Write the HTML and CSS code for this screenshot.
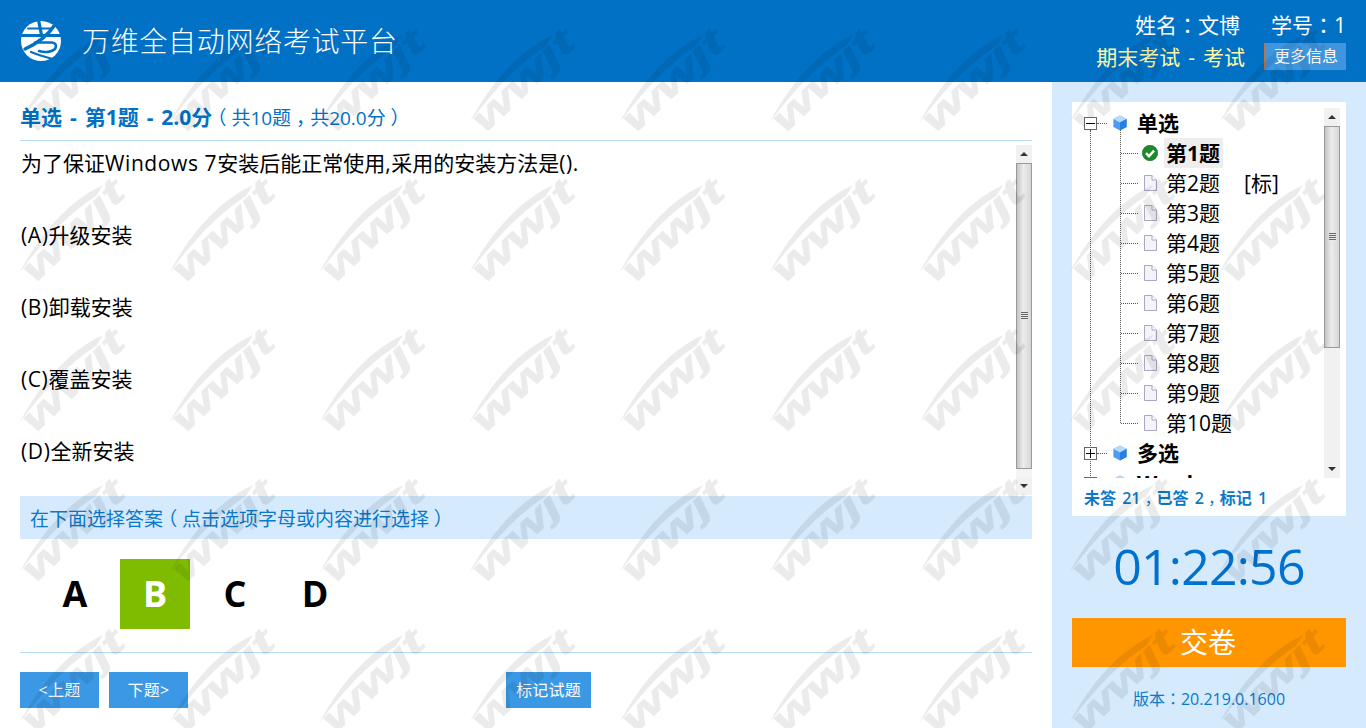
FILE: index.html
```html
<!DOCTYPE html>
<html lang="zh-CN">
<head>
<meta charset="utf-8">
<title>万维全自动网络考试平台</title>
<link rel="stylesheet" href="styles.css">
</head>
<body>
<header class="topbar">
  <div class="brand">
    <svg class="logo" viewBox="0 0 40 40" role="img" aria-label="考">
      <circle cx="20" cy="20" r="20" fill="#fff"/>
      <g fill="none" stroke="#0071c5" stroke-linecap="round">
        <path d="M7 7.5H30" stroke-width="1.8"/>
        <path d="M-1 14.5H41" stroke-width="3"/>
        <path d="M17.5 -1L20.5 14" stroke-width="3.2"/>
        <path d="M33 5C27 14 17 22 4 28" stroke-width="3.4"/>
        <path d="M14 21.5H31C35 22 36 25 34 28C31 31 24 32 18 30" stroke-width="2.6"/>
        <path d="M10 31C17 34 24 36 32 38" stroke-width="2.2"/>
      </g>
    </svg>
    <span class="brand-name">万维全自动网络考试平台</span>
  </div>
  <div class="meta">
    <div class="meta-row"><span>姓名<span class="p" lang="zh-TW">：</span>文博</span><span class="meta-id">学号<span class="p" lang="zh-TW">：</span>1</span></div>
    <div class="meta-row meta-exam"><span class="exam-name">期末考试 - 考试</span><a class="more">更多信息</a></div>
  </div>
</header>
<div class="body">
  <main class="main">
    <h1 class="qtitle"><b>单选 - 第1题 - 2.0分</b><span class="qsub"><span class="p po" lang="zh-TW">（</span>共10题<span class="p c" lang="zh-TW">，</span>共20.0分<span class="p pc" lang="zh-TW">）</span></span></h1>
    <div class="qbox">
      <div class="qtext">
        <p>为了保证<span class="lat">Windows 7</span>安装后能正常使用<span class="lat">,</span>采用的安装方法是<span class="lat">().</span></p>
        <p><span class="lat">(A)</span>升级安装</p>
        <p><span class="lat">(B)</span>卸载安装</p>
        <p><span class="lat">(C)</span>覆盖安装</p>
        <p><span class="lat">(D)</span>全新安装</p>
      </div>
      <div class="vscroll qscroll">
        <span class="sb-btn"><i class="arrow-up"></i></span>
        <span class="sb-thumb"><i class="grip"></i></span>
        <span class="sb-track"></span>
        <span class="sb-btn"><i class="arrow-down"></i></span>
      </div>
    </div>
    <div class="hint">在下面选择答案<span class="p po" lang="zh-TW">（</span>点击选项字母或内容进行选择<span class="p pc" lang="zh-TW">）</span></div>
    <div class="choices">
      <span class="choice">A</span>
      <span class="choice on">B</span>
      <span class="choice">C</span>
      <span class="choice">D</span>
    </div>
    <div class="nav">
      <div class="nav-left"><a class="btn">&lt;上题</a><a class="btn">下题&gt;</a></div>
      <a class="btn mark">标记试题</a>
    </div>
  </main>
  <aside class="side">
    <div class="treebox">
      <div class="treewrap">
        <div class="tree">
          <div class="row group"><i class="box minus"></i><i class="hdash"></i><svg class="cube" viewBox="0 0 14 16"><use href="#cube"/></svg><span>单选</span></div>
          <div class="leaves">
            <div class="row leaf"><i class="hdash2"></i><svg class="check" viewBox="0 0 16 16"><circle cx="8" cy="8" r="7.7" fill="#1d8a2b"/><circle cx="8" cy="8" r="7.7" fill="none" stroke="#0f6a1e" stroke-width=".6"/><path d="M4 8.2l3 3 5-5.6" fill="none" stroke="#fff" stroke-width="2.4"/></svg><span class="cur">第1题</span></div>
            <div class="row leaf"><i class="hdash2"></i><svg class="doc" viewBox="0 0 13 16"><use href="#doc"/></svg><span>第2题</span><span class="flag">[标]</span></div>
            <div class="row leaf"><i class="hdash2"></i><svg class="doc" viewBox="0 0 13 16"><use href="#doc"/></svg><span>第3题</span></div>
            <div class="row leaf"><i class="hdash2"></i><svg class="doc" viewBox="0 0 13 16"><use href="#doc"/></svg><span>第4题</span></div>
            <div class="row leaf"><i class="hdash2"></i><svg class="doc" viewBox="0 0 13 16"><use href="#doc"/></svg><span>第5题</span></div>
            <div class="row leaf"><i class="hdash2"></i><svg class="doc" viewBox="0 0 13 16"><use href="#doc"/></svg><span>第6题</span></div>
            <div class="row leaf"><i class="hdash2"></i><svg class="doc" viewBox="0 0 13 16"><use href="#doc"/></svg><span>第7题</span></div>
            <div class="row leaf"><i class="hdash2"></i><svg class="doc" viewBox="0 0 13 16"><use href="#doc"/></svg><span>第8题</span></div>
            <div class="row leaf"><i class="hdash2"></i><svg class="doc" viewBox="0 0 13 16"><use href="#doc"/></svg><span>第9题</span></div>
            <div class="row leaf last"><i class="hdash2"></i><svg class="doc" viewBox="0 0 13 16"><use href="#doc"/></svg><span>第10题</span></div>
          </div>
          <div class="row group link-down"><i class="box plus"></i><i class="hdash"></i><svg class="cube" viewBox="0 0 14 16"><use href="#cube"/></svg><span>多选</span></div>
          <div class="row group"><i class="box plus"></i><i class="hdash"></i><svg class="cube" viewBox="0 0 14 16"><use href="#cube"/></svg><span>Word</span></div>
        </div>
        <div class="vscroll treescroll">
          <span class="sb-btn"><i class="arrow-up"></i></span>
          <span class="sb-thumb"><i class="grip"></i></span>
          <span class="sb-track"></span>
          <span class="sb-btn"><i class="arrow-down"></i></span>
        </div>
      </div>
      <div class="stats">未答 21<span class="p c" lang="zh-TW">，</span>已答 2<span class="p c" lang="zh-TW">，</span>标记 1</div>
    </div>
    <div class="timer">01:22:56</div>
    <a class="submit">交卷</a>
    <div class="version">版本<span class="p" lang="zh-TW">：</span>20.219.0.1600</div>
  </aside>
</div>
<svg class="watermark" width="1366" height="728" aria-hidden="true">
  <defs>
    <symbol id="cube" viewBox="0 0 14 16">
      <path d="M7 .4l6.6 3.6v8L7 15.6.4 12V4z" fill="#4d9cf0"/>
      <path d="M7 .4l6.6 3.6L7 7.6.4 4z" fill="#b5dcfd"/>
      <path d="M7 7.6v8l6.6-3.6V4z" fill="#2a7fe4"/>
    </symbol>
    <symbol id="doc" viewBox="0 0 13 16">
      <path d="M.5 .5h7.5l4.5 4.5v10.5H.5z" fill="#f3f3f8" stroke="#a9a8c4"/>
      <path d="M8 .5v4.5h4.5" fill="#fff" stroke="#a9a8c4"/>
    </symbol>
    <pattern id="wm" width="150" height="150" patternUnits="userSpaceOnUse">
      <g opacity=".08" fill="#000">
        <path d="M20 122C38 88 66 52 103 35L96 46C68 64 44 90 20 122Z"/>
        <text class="wm-text" transform="translate(35 134) rotate(-44) scale(1.65 1)">wwjt</text>
      </g>
    </pattern>
  </defs>
  <rect width="1366" height="728" fill="url(#wm)"/>
</svg>
</body>
</html>
```
FILE: styles.css
```css
* { box-sizing: border-box; }
html, body { margin: 0; height: 100%; overflow: hidden; }
body {
  width: 1366px; height: 728px; background: #fff; color: #000;
  font-family: "Open Sans", "Noto Sans CJK SC", sans-serif;
  display: flex; flex-direction: column;
}
a { display: block; }
i { display: block; font-style: normal; }
.p { font-family: "Noto Sans CJK TC", sans-serif; font-weight: 400; }
.c { vertical-align: -.3em; }
.po { margin: 0 .25em 0 -.25em; }
.pc { margin: 0 -.25em 0 .25em; }
.lat { letter-spacing: .6px; }

.topbar { height: 82px; background: #0071c5; color: #fff; display: flex; justify-content: space-between; padding: 0 20px 0 21px; flex: none; }
.brand { display: flex; align-items: center; }
.logo { width: 40px; height: 40px; flex: none; }
.brand-name { margin-left: 21px; font-size: 28px; letter-spacing: .7px; line-height: 40px; font-weight: 300; }
.meta { padding-top: 8px; text-align: right; }
.meta-row { display: flex; justify-content: flex-end; align-items: center; font-size: 21px; height: 31px; }
.meta-id { margin-left: 31px; }
.meta-exam { margin-top: 2px; }
.exam-name { color: #fff9a6; word-spacing: 2.5px; padding-bottom: 2px; }
.more { margin-left: 19px; width: 82px; height: 27px; background: #3f96df; border-left: 2px solid #c8713d; font-size: 16px; line-height: 27px; text-align: center; }

.body { flex: 1; display: flex; min-height: 0; }
.main { width: 1052px; padding: 0 20px; display: flex; flex-direction: column; }
.qtitle { margin: 0; height: 59px; padding-top: 20px; font-size: 21px; line-height: 30px; font-weight: 400; color: #0071c5; border-bottom: 1px solid #b5dcf8; white-space: nowrap; }
.qtitle b { font-weight: 700; word-spacing: 2.5px; }
.qsub { font-size: 19px; }
.qbox { height: 355px; display: flex; justify-content: space-between; padding-top: 4px; }
.qtext { font-size: 21px; line-height: 36px; padding-left: 1px; }
.qtext p { margin: 0 0 36px; }
.hint { height: 43px; background: #d5eafc; color: #0b79c9; font-size: 19px; line-height: 44px; padding-left: 10px; }
.choices { height: 114px; display: flex; padding: 20px 0 0 20px; border-bottom: 1px solid #b5dcf8; flex: none; }
.choice { width: 70px; height: 70px; margin-right: 10px; text-align: center; font-size: 36px; font-weight: 700; line-height: 70px; }
.choice.on { background: #7fbc00; color: #fff; }
.nav { display: flex; padding-top: 19px; justify-content: space-between; padding-right: 441px; }
.nav-left { display: flex; gap: 10px; }
.btn { height: 36px; width: 79px; background: #3a98e4; color: #fff; font-size: 16px; letter-spacing: .3px; line-height: 36px; text-align: center; }
.mark { width: 85px; }

.side { width: 314px; background: #d5eafc; padding: 20px 20px 0; display: flex; flex-direction: column; }
.treebox { height: 414px; background: #fff; flex: none; }
.treewrap { height: 376px; padding-top: 6px; display: flex; justify-content: space-between; overflow: hidden; }
.tree { width: 250px; height: 370px; overflow: hidden; padding: 0 0 0 12px; font-size: 21px; line-height: 30px; }
.row { height: 30px; display: flex; align-items: center; white-space: nowrap; position: relative; }
.group { font-weight: 700; }
.box { width: 13px; height: 13px; border: 1px solid #666; background: #fff; position: relative; flex: none; z-index: 1; }
.box::before { content: ""; position: absolute; left: 1px; right: 1px; top: 5px; height: 1px; background: #000; }
.box.plus::after { content: ""; position: absolute; top: 1px; bottom: 1px; left: 5px; width: 1px; background: #000; }
.hdash { width: 10px; border-top: 1px dotted #555; flex: none; }
.cube { width: 14px; height: 16px; margin: 0 10px 0 6px; flex: none; }
.leaves { margin-left: 6px; padding-left: 31px; position: relative; }
.leaves::before { content: ""; position: absolute; left: 30px; top: -8px; height: 293px; border-left: 1px dotted #555; }
.leaves::after { content: ""; position: absolute; left: 0; top: -8px; bottom: -10px; border-left: 1px dotted #555; }
.link-down::after { content: ""; position: absolute; left: 6px; top: 20px; height: 20px; border-left: 1px dotted #555; }
.hdash2 { width: 17px; border-top: 1px dotted #555; flex: none; }
.check { width: 16px; height: 16px; margin: 0 8px 0 4px; flex: none; }
.doc { width: 13px; height: 16px; margin: 0 9px 0 6px; flex: none; }
.cur { font-weight: 700; background: #eee; padding: 0 3px 0 2px; margin-left: -2px; }
.flag { margin-left: 24px; }
.vscroll { width: 16px; display: flex; flex-direction: column; flex: none; }
.qscroll { height: 350px; }
.treescroll { height: 370px; margin-right: 6px; background: #f1f1f1; }
.qscroll .sb-track { background: #f4f4f4; }
.sb-btn { height: 18px; background: #f1f1f1; display: flex; align-items: center; justify-content: center; flex: none; }
.sb-thumb { flex: none; background: linear-gradient(90deg, #c4c4c4, #ececec 45%, #d6d6d6); border: 1px solid #9a9a9a; display: flex; align-items: center; justify-content: center; }
.qscroll .sb-thumb { height: 306px; }
.treescroll .sb-thumb { height: 222px; }
.sb-track { flex: 1; }
.grip { width: 7px; height: 8px; background: repeating-linear-gradient(#666 0 1px, #e8e8e8 1px 2px); }
.arrow-up { border: 4px solid transparent; border-top: 0; border-bottom: 4px solid #333; }
.arrow-down { border: 4px solid transparent; border-bottom: 0; border-top: 4px solid #333; }
.stats { font-size: 16px; font-weight: 600; color: #0b79c9; line-height: 22px; padding: 9px 0 0 12px; word-spacing: 2px; }
.timer { margin-top: 16px; text-align: center; color: #0071ce; font-size: 50px; letter-spacing: -.8px; line-height: 68px; height: 68px; }
.submit { margin-top: 18px; height: 49px; background: #ff9600; color: #fff; text-align: center; font-size: 28px; line-height: 49px; padding-right: 2px; flex: none; }
.version { margin-top: 20px; text-align: center; color: #0b79c9; font-size: 16px; line-height: 22px; }

.watermark { position: fixed; left: 0; top: 0; pointer-events: none; }
.wm-text { font-family: "Liberation Sans", sans-serif; font-size: 36px; font-weight: 700; font-style: italic; stroke: #000; stroke-width: .6px; }
```
